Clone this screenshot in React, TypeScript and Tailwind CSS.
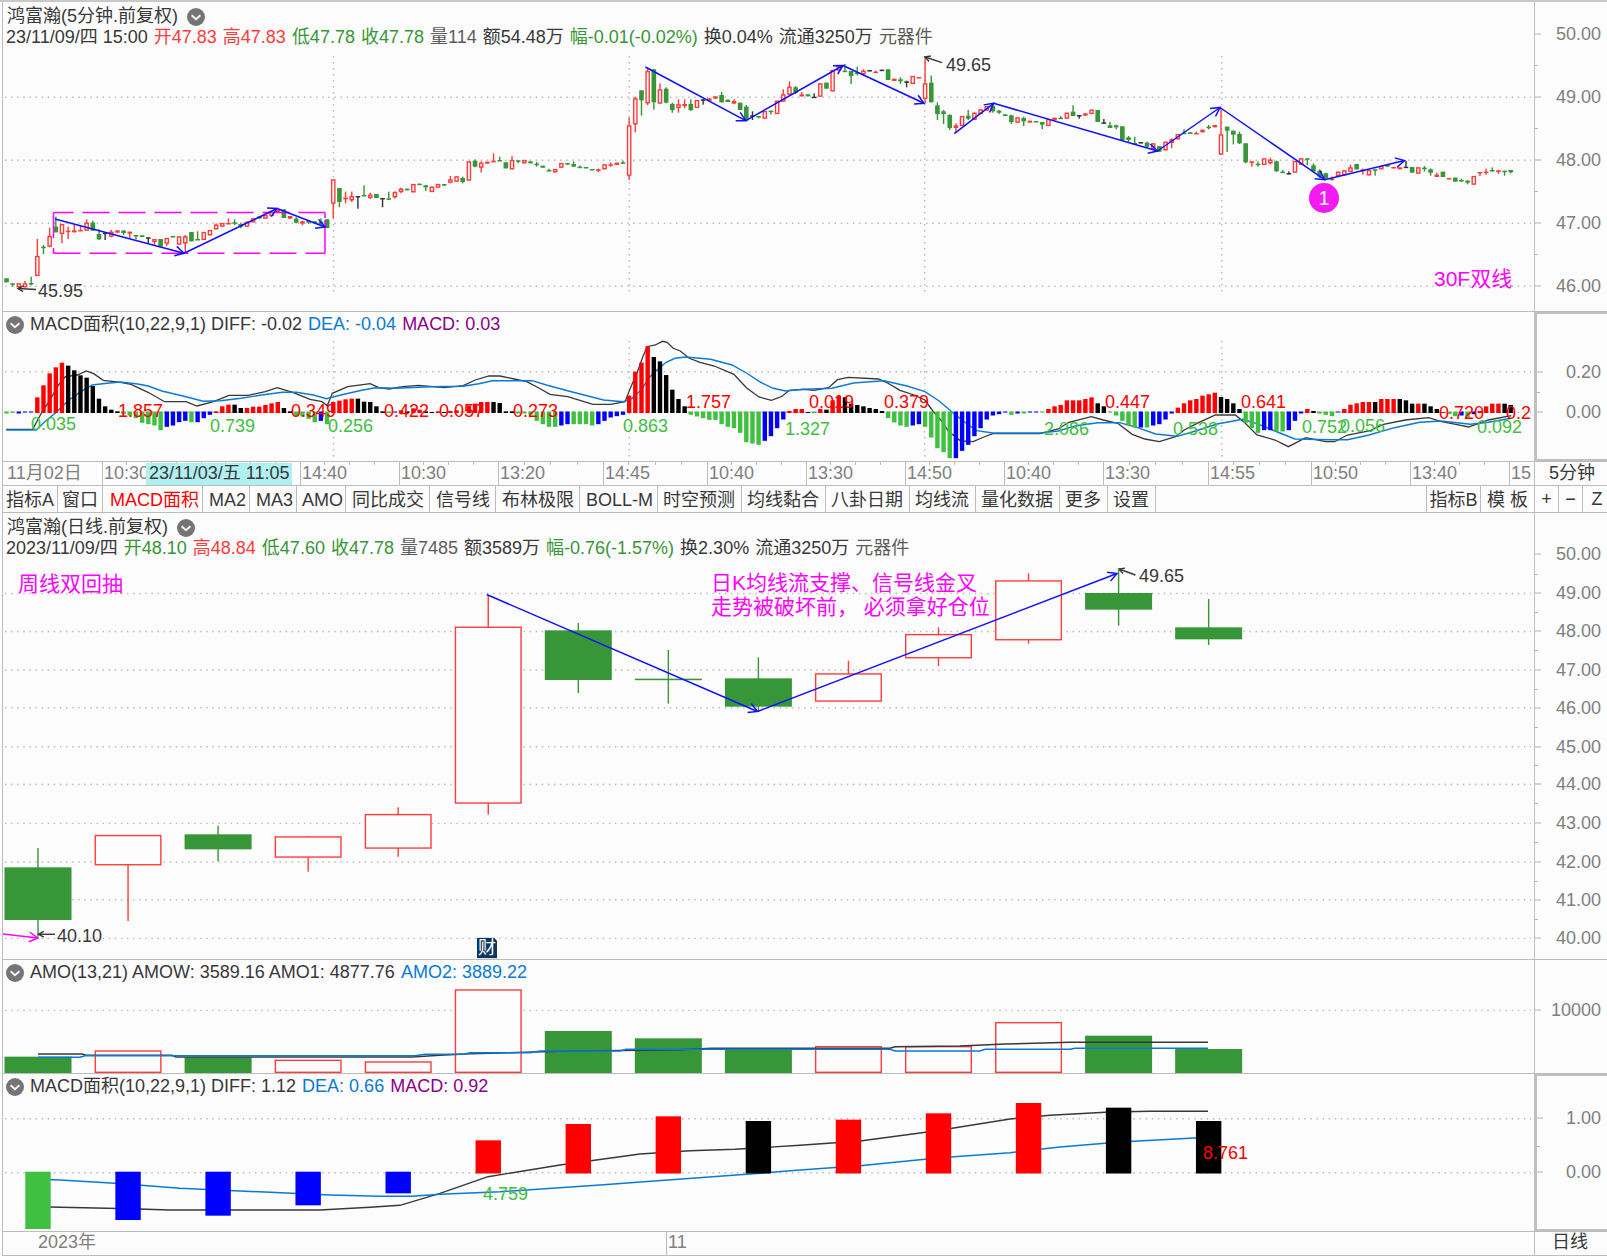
import React from "react";

const LEFT = 3;
const WIDTH = 1531;
const RED = "#ff3c3c";
const GREEN = "#379637";
const INK = "#383838";
const BLUE = "#0a7ad6";
const PAPER = "#fcfcfc";
const CANDLE_COLORS: Record<string, string> = { r: RED, g: GREEN, k: "#333333" };
const BAR_COLORS: Record<string, string> = { r: "#ff0000", g: "#40c040", k: "#000000", b: "#0000ff" };

/* One entry per candle: colour, then "top bottom" of the body, or "high top bottom low". */
const MINUTE_CANDLES = `g 835 847;g 850 850 853 860;r 850 862;r 843 850 862 862;g 830 849 852 856;r 717 768 828 828;g 735 740 744 762;r 683 708 740 742;g 650 680 697 697;r 672 672 702 730;
r 680 692 696 717;r 674 691 697 697;r 678 690 693 693;r 658 668 692 692;g 662 668 692 692;g 688 702 718 720;k 698 698 701 720;r 690 695 710 712;r 691 698;g 690 692 699 705;
r 695 695 701 715;g 705 705 708 718;g 706 711;k 712 712 715 732;r 717 717 726 738;g 717 740;r 714 714 731 738;g 708 711;r 709 734;r 705 709 730 758;
g 696 724;g 694 717 720 720;r 696 720;r 690 706;r 670 674 688 688;r 669 680;r 655 669 672 672;g 658 667 671 675;g 668 672 680 685;r 665 680;
r 655 667;k 650 655;r 645 656;r 636 648;r 630 637;g 628 654;r 648 656;g 652 656 668 670;r 662 664 671 676;g 660 663 668 672;
g 664 670;g 655 665 672 675;g 658 684;r 538 538 611 655;g 564 564 606 622;r 575 593 598 610;r 575 588 601 606;k 588 588 591 626;g 556 585 588 588;r 578 584 594 597;
g 582 594;k 594 594 597 622;g 575 595 598 598;r 574 576 592 596;r 563 566 576 580;g 566 571;r 552 577;g 551 554;g 555 556 562 573;r 560 576;
r 552 563;g 552 552 555 558;r 528 538 548 550;r 529 545;g 530 534 546 550;r 484 542;g 478 482 500 502;r 484 488 503 518;r 485 491;r 460 482 487 487;
g 470 480 483 483;g 487 505;r 468 480 508 508;g 481 481 484 490;r 480 490;g 484 490;g 486 491 495 500;g 497 503;g 506 510 514 514;r 507 517;
r 489 503;g 489 489 492 495;g 484 492 500 500;g 497 500 503 503;g 501 504;g 507 510;r 506 508 513 517;r 493 508;r 487 493 496 500;r 488 495;
g 482 487 491 491;r 352 376 527 540;r 290 295 373 397;g 271 271 301 347;r 205 213 310 315;g 208 208 307 329;r 250 268 311 311;g 262 266 308 310;g 308 312 330 338;r 298 313 324 338;
r 298 312 318 325;g 298 312 330 333;r 300 324;k 298 298 301 314;r 295 302;r 289 296;g 276 285 307 307;g 299 306;r 298 303 311 311;g 308 330;
g 315 320 362 362;k 334 346 349 360;g 348 348 352 355;r 333 356;g 332 332 335 344;r 302 342;r 268 283 305 305;r 244 260 284 285;g 258 262 278 282;r 276 283 289 290;
g 283 289;k 280 290 293 293;r 250 290;g 248 266;r 210 274;r 198 212;g 192 212 215 215;g 213 213 228 252;g 200 217 222 226;r 208 212 223 228;
k 210 214;r 212 215 218 218;k 209 213;g 208 240;r 236 243;g 232 238 244 252;k 242 244 247 262;r 228 252;r 231 235;r 168 250 297 310;
g 227 248 307 307;g 307 316 342 360;g 330 334 342 372;g 343 345 384 390;r 370 376 384 398;r 348 378;g 330 347 356 360;r 338 360;r 328 342;r 318 332;
g 310 318 334 338;g 330 332 338 342;g 343 348;g 344 346 366 372;r 352 368;g 350 354 364 378;r 362 368;g 363 366;g 366 366 374 388;r 357 378;
r 353 361;g 348 353 356 356;r 338 356;g 316 335 348 348;k 345 345 348 356;r 340 347;r 329 342;g 330 366;k 357 367 370 370;g 366 376 384 384;
g 374 376 382 388;g 379 420;g 408 412 420 426;g 410 429 432 432;k 426 430;g 425 428 440 444;r 430 430 446 450;g 438 455;r 425 451;r 415 418 428 445;
r 402 418;g 388 398 402 402;g 397 402;r 395 399 402 402;r 389 397;g 375 380 384 388;r 375 382;r 325 403 464 465;g 380 380 392 456;g 392 392 404 433;
g 395 402 430 432;g 430 430 487 490;r 484 484 489 500;g 484 491 495 500;r 475 495;r 473 479 490 493;g 482 484 514 516;g 510 515 518 518;k 514 519 523 523;r 483 518;
r 475 494;g 475 475 478 495;g 490 496 514 518;g 508 512 530 535;g 518 520 534 540;r 530 536 540 542;r 515 528;r 511 526;r 494 502 516 516;g 492 508;
r 506 508 514 524;r 510 526;g 508 508 511 527;r 498 508;g 495 500;r 501 505;r 502 508;k 483 500 503 503;g 501 518;r 502 521;
g 498 503 506 515;g 505 508 518 527;r 518 524 531 531;g 515 531;r 534 537;g 533 545;g 536 540 543 545;g 540 542 548 553;r 528 554;r 516 516 519 528;
r 506 515 518 524;g 502 510 514 515;r 510 511 516 522;g 512 512 515 527;g 510 510 517 520`;

/* Signed histogram heights, in thirds of a pixel. */
const MINUTE_BARS =
  "g-6 g-4 b-6 b-3 b-3 r47 r83 r119 r137 r151 k142 k128 k113 k106 k81 k43 k20 k10 k5 g-8 g-12 g-20 g-34 g-38 g-42 g-56 b-46 b-42 b-32 b-28 g-32 b-32 b-20 b-10 r5 r20 r25 k25 k15 r15 r19 r19 r24 r29 r33 k15 k5 g-15 g-15 g-22 g-32 b-28 g-38 " +
  "r33 r37 r41 r43 k43 k34 k33 k20 k5 g-5 b-3 r8 k5 r14 r10 k5 k3 r5 k3 r6 r8 g-2 r22 r28 r33 r33 k33 k30 k5 k5 g-6 g-6 g-10 g-28 g-38 g-46 g-46 b-42 b-38 g-38 g-38 g-38 g-42 b-38 b-28 b-18 b-14 b-10 " +
  "r52 r124 r151 r200 k168 k155 k114 k70 k42 k20 g-10 g-15 g-20 g-25 g-25 g-38 g-46 g-50 g-64 g-92 g-96 g-100 b-88 b-74 b-50 b-24 r6 r12 r12 k3 g-5 r12 k10 r38 r52 k47 k28 k24 k20 k15 k12 k6 g-20 g-33 g-42 g-46 b-42 b-38 " +
  "g-46 g-78 g-110 g-122 g-140 b-140 b-118 b-100 b-74 b-50 b-24 b-12 b-8 b-3 g-10 b-6 g-6 b-3 b-3 g-3 r12 r20 r24 r38 r38 r38 r42 r47 k29 k20 g-3 g-12 g-28 g-42 g-48 b-48 g-48 b-42 b-38 b-24 b-6 r16 r29 r38 r42 r52 r56 r61 " +
  "k48 k42 k29 k12 g-34 g-50 g-64 b-56 b-56 g-60 g-60 b-56 b-28 b-6 r12 k6 g-6 g-10 g-14 b-2 r12 r25 r29 r33 r33 k33 r42 r42 r42 k42 k38 k28 r28 k28 k20 k12 r3 g-8 g-14 b-12 g-18 b-8 r6 r20 r28 r28 k28 k24";

const DAILY_CANDLES =
  "g 864 922 1080 1130;r 825 825 916 1083;g 797 823 868 904;r 829 829 893 935;r 742 762 866 890;r 106 200 731 764;g 189 211 360 399;g 270 356 359 431;g 292 355 440 455;r 302 340 425 425;r 202 222 295 318;r 40 61 241 251;g 30 99 149 197;g 117 202 238 255";
const DAILY_AMOUNTS = "g350 r333 g352 r361 r366 r150 g273 g295 g330 r320 r320 r248 g287 g327";
const DAILY_BARS = "g-867 b-840 b-827 b-796 b-760 r601 r552 r529 k543 r539 r520 r489 k503 k543";

const minuteX = (i: number) => 6.5 + 6.165 * i;
const dailyX = (i: number) => 38 + 90.05 * i;
const DAY_BREAKS = [333.5, 629.3, 924.7, 1221.8];

type Pt = [number, number];

/* Places a run of points: x from an origin with its own step, y in thirds of a pixel. */
const run = (x0: number, step: number, y0: number, text: string): string =>
  text
    .split(" ")
    .map((p) => {
      const [x, y] = p.split(",").map(Number);
      return `${(x0 + x * step).toFixed(1)},${(y0 + y / 3).toFixed(1)}`;
    })
    .join(" ");

const MINUTE_DIFF = [
  run(0, 0.3444, 305, "18,373 95,373 120,325 145,285 170,240 190,215 225,210 250,198 272,206 300,226 350,232 380,238 430,262 478,290 540,290 572,303 620,290 665,271 720,271 770,260 805,248 850,262 900,283 935,290 950,302 965,265 1010,245 1075,236 1100,248 1130,252 1170,245 1215,241 1290,248 1345,242 1380,225 1420,213 1451,213"),
  run(500, 0.3571, 305, "0,213 40,222 75,230 110,250 140,268 190,275 260,298 310,298 350,290 365,250 385,200 400,155 412,125 435,120 455,109 468,112 485,130 505,138 530,160 560,172 600,183 655,208 690,248 725,276 760,286 790,274 810,256 850,253 880,256 920,248 945,224 975,217 1060,222 1085,234 1120,256 1160,270 1190,285 1210,315 1240,352 1255,378 1290,408 1325,410 1355,396 1380,386 1500,386"),
  run(1040, 0.3616, 305, "0,386 50,372 80,352 142,335 175,345 215,355 255,388 290,402 330,410 375,395 400,374 440,352 485,330 540,330 565,352 600,390 650,405 687,425 735,398 790,410 815,410 850,390 910,378 950,358 1010,345 1075,338 1110,350 1150,358 1185,366 1240,345 1303,332"),
].join(" ");

const MINUTE_DEA = [
  run(0, 0.3444, 305, "18,375 105,375 130,350 165,320 200,285 235,260 268,240 310,235 350,231 400,237 430,243 470,258 540,275 590,289 640,287 700,280 760,270 820,262 860,262 910,270 948,281 990,270 1050,256 1090,248 1150,250 1250,245 1345,244 1390,236 1430,227"),
  run(500, 0.3571, 305, "0,227 90,227 130,240 200,260 290,285 345,290 370,280 395,255 420,215 440,195 465,172 490,160 520,156 590,163 650,180 690,204 730,232 765,250 800,258 850,253 930,250 990,234 1075,227 1140,243 1190,260 1230,288 1265,320 1300,350 1335,377 1380,384 1500,384"),
  run(1040, 0.3616, 305, "0,384 50,378 100,362 160,353 220,353 270,368 320,387 380,394 430,378 490,357 560,343 600,356 650,378 705,402 800,404 850,404 910,390 980,368 1050,352 1110,348 1190,358 1240,352 1303,340"),
].join(" ");

const AMO1 = run(0, 1, 940, "38,342 82,342 86,346 172,346 176,351 412,351 440,346 470,341 560,334 680,329 712,325 890,325 895,320 960,318 1005,312 1070,307 1208,307");
const AMO2 = run(0, 1, 940, "38,352 80,352 85,347 415,347 425,343 465,342 470,338 530,338 540,333 620,333 626,328 890,328 895,333 980,333 985,328 1070,328 1075,325 1208,325");
const DAILY_DIFF = run(0, 1, 940, "38,800 84,803 130,806 170,810 320,810 370,802 400,796 440,760 488,710 560,675 640,642 690,632 735,628 800,616 860,603 935,573 1010,537 1050,526 1110,516 1150,514 1208,514");
const DAILY_DEA = run(0, 1, 940, "38,718 60,720 115,730 180,745 240,753 330,765 380,769 412,769 440,763 500,755 600,735 668,720 750,702 800,690 860,677 940,653 1010,638 1060,621 1120,606 1208,592");

function Candles({ data, xOf, y0, width }: { data: string; xOf: (i: number) => number; y0: number; width: number }) {
  return (
    <g>
      {data.split(";").map((entry, i) => {
        const [kind, ...n] = entry.trim().split(" ");
        const v = n.map((t) => y0 + Number(t) / 3);
        const [high, top, bottom, low] = v.length === 2 ? [v[0], v[0], v[1], v[1]] : v;
        const color = CANDLE_COLORS[kind];
        const x = xOf(i);
        const h = Math.max(bottom - top, 1.5);
        const hollow = kind === "r" && h > 2.8;
        return (
          <g key={i} fill={color}>
            <rect x={x - 0.7} y={high} width={1.4} height={Math.max(low - high, 0.5)} />
            {hollow ? (
              <rect x={x - width / 2 + 0.7} y={top + 0.6} width={width - 1.4} height={h - 1.2} fill={PAPER} stroke={color} strokeWidth={1.4} />
            ) : (
              <rect x={x - width / 2} y={top} width={width} height={h} />
            )}
          </g>
        );
      })}
    </g>
  );
}

function Arrow({ from, to, color = "#1010ff", size = 10, stroke = 1.5 }: { from: Pt; to: Pt; color?: string; size?: number; stroke?: number }) {
  const a = Math.atan2(to[1] - from[1], to[0] - from[0]);
  const arm = (d: number) => `${to[0] - size * Math.cos(a + d)},${to[1] - size * Math.sin(a + d)}`;
  return (
    <g fill="none" stroke={color} strokeWidth={stroke}>
      <path d={`M${from[0]},${from[1]} L${to[0]},${to[1]}`} />
      <path d={`M${arm(0.5)} L${to[0]},${to[1]} L${arm(-0.5)}`} />
    </g>
  );
}

function ArrowPath({ points }: { points: Pt[] }) {
  return (
    <>
      {points.slice(1).map((p, i) => (
        <Arrow key={i} from={points[i]} to={p} />
      ))}
    </>
  );
}

function Grid({ rows, columns = [], top = 0, bottom = 0 }: { rows: number[]; columns?: number[]; top?: number; bottom?: number }) {
  return (
    <g stroke="#b8b8b8" strokeWidth={1.4}>
      {rows.map((y) => (
        <line key={y} x1={5} x2={1531} y1={y} y2={y} strokeDasharray="1.4 4.7" />
      ))}
      {columns.map((x) => (
        <line key={x} x1={x} x2={x} y1={top} y2={bottom} strokeDasharray="1.4 4.6" />
      ))}
    </g>
  );
}

function Plot({ top, height, label, children }: { top: number; height: number; label: string; children: React.ReactNode }) {
  return (
    <svg role="img" aria-label={label} className="absolute inset-0 size-full" viewBox={`${LEFT} ${top} ${WIDTH} ${height}`} preserveAspectRatio="none">
      {children}
    </svg>
  );
}

function Note({ x, y, className = "", children }: { x: number; y: number; className?: string; children: React.ReactNode }) {
  return (
    <span className={`absolute -translate-y-1/2 whitespace-nowrap ${className}`} style={{ left: `${((x - LEFT) / WIDTH) * 100}%`, top: y }}>
      {children}
    </span>
  );
}

function Axis({ labels, minor, top, boxed = false }: { labels: [string, number][]; minor: number[]; top: number; boxed?: boolean }) {
  return (
    <div className={`relative w-[73px] shrink-0 overflow-hidden border-[#c0c0c0] text-[#808080] ${boxed ? "border-y-2 border-l-3" : "border-l"}`}>
      {labels.map(([text, y]) => (
        <div key={text} className={`absolute inset-x-0 flex -translate-y-1/2 items-center justify-between pr-1.5 ${boxed ? "-mt-0.5" : ""}`} style={{ top: y - top }}>
          <span className="h-px w-1.5 bg-[#b0b0b0]" />
          <span>{text}</span>
        </div>
      ))}
      {minor.map((y) => (
        <span key={y} className="absolute left-0 h-px w-[3px] bg-[#b0b0b0]" style={{ top: y - top }} />
      ))}
    </div>
  );
}

function Toggle({ label }: { label: string }) {
  return (
    <button type="button" aria-label={label} className="flex size-[18px] shrink-0 items-center justify-center rounded-full bg-[#757575]">
      <svg viewBox="0 0 18 18" className="size-[18px]" fill="none" stroke="#f4f4f4" strokeWidth="2">
        <path d="M4.6 7.2 L9 11.2 L13.4 7.2" />
      </svg>
    </button>
  );
}

function QuoteHeader({ title, items }: { title: string; items: [string, string][] }) {
  return (
    <header className="relative pt-1 pl-[3px]">
      <div className="flex h-[21px] items-center gap-[9px] pl-px">
        <h2>{title}</h2>
        <Toggle label={`${title} 菜单`} />
      </div>
      <div className="flex h-[21px] items-center gap-1.5 whitespace-nowrap">
        {items.map(([text, tone]) => (
          <span key={text} className={tone}>
            {text}
          </span>
        ))}
      </div>
    </header>
  );
}

function IndicatorHeader({ items }: { items: [string, string][] }) {
  return (
    <header className="relative flex h-[25px] items-center gap-1.5 pl-[3px] whitespace-nowrap">
      <Toggle label="指标菜单" />
      {items.map(([text, tone]) => (
        <span key={text} className={tone}>
          {text}
        </span>
      ))}
    </header>
  );
}

const INK_T = "text-[#383838]";
const GRAY_T = "text-[#5c5c5c]";
const RED_T = "text-[#ff3c3c]";
const GREEN_T = "text-[#379637]";
const BLUE_T = "text-[#0a7ad6]";
const PURPLE_T = "text-[#8b008b]";
const HOT = "text-[#ff0000]";
const LIME = "text-[#40c040]";
const PINK = "text-[21px] leading-6 text-[#ff00ff]";

const AREA_LABELS: [string, number, number, string][] = [
  ["0.035", 31, 424, LIME],
  ["1.857", 118, 411, HOT],
  ["0.739", 210, 426, LIME],
  ["0.349", 291, 411, HOT],
  ["0.256", 328, 426, LIME],
  ["0.422", 384, 411, HOT],
  ["0.057", 439, 411, HOT],
  ["0.273", 513, 411, HOT],
  ["0.863", 623, 426, LIME],
  ["1.757", 686, 402, HOT],
  ["1.327", 785, 429, LIME],
  ["0.019", 809, 402, HOT],
  ["0.379", 884, 402, HOT],
  ["2.086", 1044, 429, LIME],
  ["0.447", 1105, 402, HOT],
  ["0.538", 1173, 429, LIME],
  ["0.641", 1241, 402, HOT],
  ["0.752", 1302, 427, LIME],
  ["0.056", 1340, 426, LIME],
  ["0.720", 1439, 413, HOT],
  ["0.092", 1477, 427, LIME],
  ["0.2", 1506, 413, HOT],
];

const TIMES: [string, number][] = [
  ["11月02日", 99],
  ["10:30", 99],
  ["", 99],
  ["14:40", 99],
  ["10:30", 99],
  ["13:20", 105],
  ["14:45", 104],
  ["10:40", 99],
  ["13:30", 99],
  ["14:50", 99],
  ["10:40", 99],
  ["13:30", 105],
  ["14:55", 103],
  ["10:50", 99],
  ["13:40", 99],
  ["15", 25],
];

const TABS: [string, string][] = [
  ["指标A", "px-[3px]"],
  ["窗口", "px-1"],
  ["MACD面积", "pl-[7px] pr-[3px] text-[#ff0000]"],
  ["MA2", "pl-1.5 pr-[3px]"],
  ["MA3", "pl-1.5 pr-[3px]"],
  ["AMO", "pl-[5px] pr-0.5"],
  ["同比成交", "pl-1.5 pr-[5px]"],
  ["信号线", "pl-1.5 pr-[5px]"],
  ["布林极限", "pl-1.5 pr-[5px]"],
  ["BOLL-M", "pl-1.5 pr-1"],
  ["时空预测", "pl-[5px] pr-1.5"],
  ["均线黏合", "pl-[5px] pr-1.5"],
  ["八卦日期", "pl-[5px] pr-1.5"],
  ["均线流", "pl-[5px] pr-1.5"],
  ["量化数据", "pl-[5px] pr-1.5"],
  ["更多", "pl-[5px] pr-1.5"],
  ["设置", "pl-[5px] pr-1.5"],
];

const ROW = "flex border-b border-[#bcbcbc]";

export default function App() {
  return (
    <main lang="zh-CN" className="w-full overflow-hidden bg-[#fcfcfc] font-['Liberation_Sans','Noto_Sans_CJK_SC',sans-serif] text-[18px] leading-[21px] text-[#383838]">
      <div className="h-0.5 bg-[#c8c8c8]" />
      <div className="ml-0.5 border-l border-[#bcbcbc]">
        {/* Five-minute candles */}
        <section className={`${ROW} h-[310px]`}>
          <div className="relative min-w-0 grow overflow-hidden">
            <Plot top={2} height={309} label="5分钟K线">
              <Grid rows={[97.3, 160.3, 223.3, 286.3]} columns={DAY_BREAKS} top={56} bottom={292} />
              <Candles data={MINUTE_CANDLES} xOf={minuteX} y0={0} width={4.6} />
              <g fill="none" stroke="#ff00ff" strokeWidth={1.5}>
                <path d="M53.5 212.5 H325" strokeDasharray="27 9" strokeDashoffset={7} />
                <path d="M53.5 253.3 H325" strokeDasharray="27 9" />
                <path d="M53.5 212.5 V238 M53.5 248 V253.5" />
                <path d="M325 212.5 V218 M325 220 V253.5" />
              </g>
              <ArrowPath points={[[55, 219], [184, 253.3], [277, 208.5], [325, 227]]} />
              <ArrowPath points={[[645.4, 67], [745.7, 120.7], [843, 65.5], [924, 103.3]]} />
              <ArrowPath points={[[954.3, 133.7], [993.6, 103.3], [1157.5, 151], [1220, 107.5], [1324.6, 179.7], [1404.5, 160.5]]} />
              <Arrow from={[36, 289.5]} to={[18, 288.5]} color={INK} size={6} stroke={1.4} />
              <Arrow from={[942, 62.7]} to={[925, 57]} color={INK} size={6} stroke={1.4} />
            </Plot>
            <QuoteHeader
              title="鸿富瀚(5分钟.前复权)"
              items={[
                ["23/11/09/四 15:00", INK_T],
                ["开47.83", RED_T],
                ["高47.83", RED_T],
                ["低47.78", GREEN_T],
                ["收47.78", GREEN_T],
                ["量114", GRAY_T],
                ["额54.48万", INK_T],
                ["幅-0.01(-0.02%)", GREEN_T],
                ["换0.04%", INK_T],
                ["流通3250万", INK_T],
                ["元器件", GRAY_T],
              ]}
            />
            <Note x={38} y={289}>45.95</Note>
            <Note x={946} y={63}>49.65</Note>
            <Note x={1434} y={277} className={PINK}>30F双线</Note>
            <Note x={1309} y={196} className="flex size-[30px] items-center justify-center rounded-full bg-[#f31af3] text-xl text-white">1</Note>
          </div>
          <Axis
            top={2}
            labels={[["50.00", 34], ["49.00", 97], ["48.00", 160], ["47.00", 223], ["46.00", 286]]}
            minor={[65, 128, 191, 254]}
          />
        </section>

        {/* Five-minute MACD area */}
        <section className={`${ROW} h-[150px]`}>
          <div className="relative min-w-0 grow overflow-hidden">
            <Plot top={312} height={149} label="MACD面积">
              <Grid rows={[371.7, 412.3]} columns={DAY_BREAKS} top={341} bottom={457} />
              <polyline points={MINUTE_DIFF} fill="none" stroke={INK} strokeWidth={1.3} />
              <polyline points={MINUTE_DEA} fill="none" stroke={BLUE} strokeWidth={1.4} />
              {MINUTE_BARS.split(" ").map((b, i) => {
                const v = Number(b.slice(1)) / 3;
                return <rect key={i} x={minuteX(i) - 2.2} y={v > 0 ? 413 - v : 411.5} width={4.4} height={Math.max(Math.abs(v), 1)} fill={BAR_COLORS[b[0]]} />;
              })}
            </Plot>
            <IndicatorHeader
              items={[
                ["MACD面积(10,22,9,1) DIFF: -0.02", INK_T],
                ["DEA: -0.04", BLUE_T],
                ["MACD: 0.03", PURPLE_T],
              ]}
            />
            {AREA_LABELS.map(([text, x, y, tone]) => (
              <Note key={`${text}${x}`} x={x} y={y - 312} className={tone}>
                {text}
              </Note>
            ))}
          </div>
          <Axis top={312} boxed labels={[["0.20", 372], ["0.00", 412]]} minor={[390]} />
        </section>

        {/* Five-minute time scale */}
        <section className={`${ROW} h-6`}>
          <div className="relative flex min-w-0 grow overflow-hidden text-[#808080]">
            {TIMES.map(([text, span], i) => (
              <div key={i} className="relative w-0 min-w-0 whitespace-nowrap" style={{ flexGrow: span }}>
                {i > 0 && <span className="absolute inset-y-0 left-0 w-px bg-[#bcbcbc]" />}
                {i > 0 && span > 50 && (
                  <span className="absolute inset-x-0 top-0 flex h-[3px] justify-evenly">
                    <i className="w-px bg-[#bcbcbc]" />
                    <i className="w-px bg-[#bcbcbc]" />
                    <i className="w-px bg-[#bcbcbc]" />
                  </span>
                )}
                <span className={`block pt-px ${i ? "pl-0.5" : "pl-1"}`}>{text}</span>
              </div>
            ))}
            <Note x={146} y={12} className="h-[22px] bg-[#b0f0f0] px-[3px] text-[#383838]">23/11/03/五 11:05</Note>
          </div>
          <div className="w-[73px] shrink-0 border-l border-[#bcbcbc] pt-px pl-3.5">5分钟</div>
        </section>

        {/* Indicator switcher */}
        <nav aria-label="指标" className={`${ROW} h-[27px]`}>
          {TABS.map(([text, pad]) => (
            <button key={text} type="button" className={`shrink-0 border-r border-[#bcbcbc] pt-0.5 whitespace-nowrap ${pad}`}>
              {text}
            </button>
          ))}
          <span className="grow" />
          <button type="button" className="w-[54px] shrink-0 border-l border-[#bcbcbc] pt-0.5">指标B</button>
          <button type="button" className="w-[54px] shrink-0 border-l border-[#bcbcbc] pt-0.5">模 板</button>
          <button type="button" aria-label="放大" className="w-6 shrink-0 border-l border-[#bcbcbc]">+</button>
          <button type="button" aria-label="缩小" className="w-6 shrink-0 border-l border-[#bcbcbc]">−</button>
          <button type="button" className="w-[25px] shrink-0 border-l border-[#bcbcbc] pl-1">Z</button>
        </nav>

        {/* Daily candles */}
        <section className={`${ROW} h-[447px]`}>
          <div className="relative min-w-0 grow overflow-hidden">
            <Plot top={513} height={446} label="日K线">
              <Grid rows={[593.5, 631.5, 670, 707.7, 746.7, 784.5, 823.4, 862, 899.7, 938.4]} />
              <Candles data={DAILY_CANDLES} xOf={dailyX} y0={560} width={67} />
              <ArrowPath points={[[486.7, 594.5], [757.5, 711.5], [1117, 573.5]]} />
              <Arrow from={[1135.5, 575]} to={[1119, 569]} color={INK} size={6} stroke={1.4} />
              <Arrow from={[55, 934.3]} to={[38.5, 934.3]} color={INK} size={6} stroke={1.4} />
              <Arrow from={[3, 934]} to={[38, 938]} color="#ff00ff" />
            </Plot>
            <QuoteHeader
              title="鸿富瀚(日线.前复权)"
              items={[
                ["2023/11/09/四", INK_T],
                ["开48.10", GREEN_T],
                ["高48.84", RED_T],
                ["低47.60", GREEN_T],
                ["收47.78", GREEN_T],
                ["量7485", GRAY_T],
                ["额3589万", INK_T],
                ["幅-0.76(-1.57%)", GREEN_T],
                ["换2.30%", INK_T],
                ["流通3250万", INK_T],
                ["元器件", GRAY_T],
              ]}
            />
            <Note x={18} y={71} className={PINK}>周线双回抽</Note>
            <Note x={711} y={82} className={PINK}>
              日K均线流支撑、信号线金叉
              <br />
              走势被破坏前， 必须拿好仓位
            </Note>
            <Note x={1139} y={63}>49.65</Note>
            <Note x={57} y={423}>40.10</Note>
            <Note x={477} y={435} className="bg-[#0b3563] px-px text-white [clip-path:polygon(0_0,84%_0,100%_16%,100%_100%,0_100%)]">财</Note>
          </div>
          <Axis
            top={513}
            labels={[["50.00", 554], ["49.00", 593], ["48.00", 631], ["47.00", 670], ["46.00", 708], ["45.00", 747], ["44.00", 784], ["43.00", 823], ["42.00", 862], ["41.00", 900], ["40.00", 938]]}
            minor={[574, 612, 650, 689, 727, 765, 803, 842, 881, 919]}
          />
        </section>

        {/* Daily turnover */}
        <section className={`${ROW} h-[114px]`}>
          <div className="relative min-w-0 grow overflow-hidden">
            <Plot top={960} height={113} label="AMO">
              <Grid rows={[1010.4]} />
              {DAILY_AMOUNTS.split(" ").map((a, i) => {
                const y = 940 + Number(a.slice(1)) / 3;
                const x = dailyX(i);
                return a[0] === "r" ? (
                  <rect key={i} x={x - 32.8} y={y} width={65.6} height={1072.3 - y} fill={PAPER} stroke={RED} strokeWidth={1.4} />
                ) : (
                  <rect key={i} x={x - 33.5} y={y} width={67} height={1073 - y} fill={GREEN} />
                );
              })}
              <polyline points={AMO1} fill="none" stroke={INK} strokeWidth={1.5} />
              <polyline points={AMO2} fill="none" stroke={BLUE} strokeWidth={1.5} />
            </Plot>
            <IndicatorHeader
              items={[
                ["AMO(13,21) AMOW: 3589.16 AMO1: 4877.76", INK_T],
                ["AMO2: 3889.22", BLUE_T],
              ]}
            />
          </div>
          <Axis top={960} labels={[["10000", 1010]]} minor={[]} />
        </section>

        {/* Daily MACD area */}
        <section className={`${ROW} h-[158px]`}>
          <div className="relative min-w-0 grow overflow-hidden">
            <Plot top={1074} height={157} label="日线MACD面积">
              <Grid rows={[1118.7, 1172.7]} />
              <polyline points={DAILY_DIFF} fill="none" stroke={INK} strokeWidth={1.4} />
              <polyline points={DAILY_DEA} fill="none" stroke={BLUE} strokeWidth={1.5} />
              {DAILY_BARS.split(" ").map((b, i) => {
                const v = Number(b.slice(1));
                const y = 940 + Math.abs(v) / 3;
                return (
                  <rect key={i} x={dailyX(i) - 12.7} y={v > 0 ? y : 1171.7} width={25.4} height={v > 0 ? 1173.5 - y : y - 1171.7} fill={BAR_COLORS[b[0]]} />
                );
              })}
            </Plot>
            <IndicatorHeader
              items={[
                ["MACD面积(10,22,9,1) DIFF: 1.12", INK_T],
                ["DEA: 0.66", BLUE_T],
                ["MACD: 0.92", PURPLE_T],
              ]}
            />
            <Note x={483} y={120} className={LIME}>4.759</Note>
            <Note x={1203} y={79} className={HOT}>8.761</Note>
          </div>
          <Axis top={1074} boxed labels={[["1.00", 1118], ["0.00", 1172]]} minor={[1144]} />
        </section>

        {/* Daily time scale */}
        <section className={`${ROW} h-6`}>
          <div className="flex min-w-0 grow text-[#808080]">
            <div className="w-0" style={{ flexGrow: 663 }}>
              <span className="block pl-[35px] whitespace-nowrap">2023年</span>
            </div>
            <div className="w-0" style={{ flexGrow: 868 }}>
              <span className="block h-full border-l border-[#bcbcbc] pl-px">11</span>
            </div>
          </div>
          <div className="w-[73px] shrink-0 border-l border-[#bcbcbc] pl-[17px]">日线</div>
        </section>
      </div>
    </main>
  );
}
